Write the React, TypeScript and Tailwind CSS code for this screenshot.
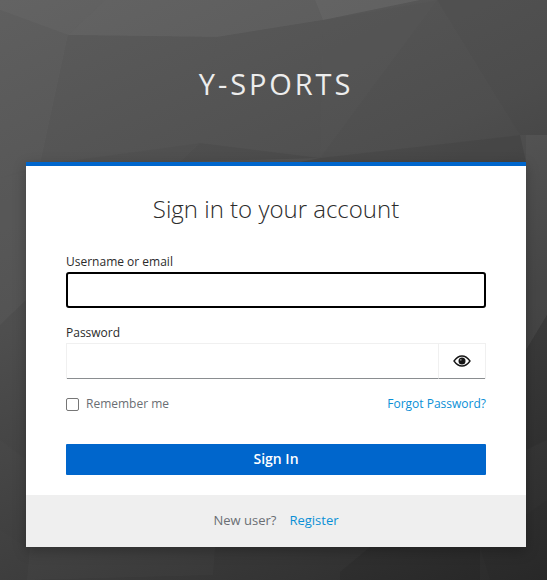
import React from "react";

const polys: [string, string, number][] = [
  ["0,0 105,0 68,35 0,10", "#fff", 0.03],
  ["105,0 315,0 323,20 217,37 68,35", "#fff", 0.04],
  ["315,0 420,0 323,20", "#fff", 0.07],
  ["0,10 68,35 40,165 0,178", "#fff", 0.01],
  ["68,35 217,37 200,143 40,165", "#000", 0.02],
  ["217,37 323,20 320,158 200,143", "#000", 0.02],
  ["323,20 437,0 320,158", "#000", 0.01],
  ["437,0 520,135 320,158", "#000", 0.03],
  ["437,0 547,0 547,135 520,135", "#000", 0.06],
  ["40,165 200,143 180,162 26,162", "#000", 0.05],
  ["200,143 320,158 180,162", "#000", 0.08],
  ["320,158 520,135 526,162 300,162", "#000", 0.09],
  ["0,178 26,172 26,300 0,325", "#fff", 0.01],
  ["0,325 26,300 26,460 0,440", "#000", 0.03],
  ["0,440 26,460 26,547 0,530", "#000", 0.01],
  ["30,547 215,547 213,575 27,580", "#fff", 0.02],
  ["370,547 480,547 480,580 340,580 340,572", "#000", 0.08],
  ["480,547 547,500 547,580 490,580", "#000", 0.03],
  ["526,135 547,135 547,315 526,350", "#fff", 0.03],
  ["526,350 547,315 547,440 526,450", "#000", 0.06],
];

export default function App() {
  return (
    <div
      className="relative h-[580px] w-[547px] overflow-hidden bg-[linear-gradient(155deg,#5e5e5e_0%,#515151_40%,#2a2a2a_100%)] text-[#151515]"
      style={{ fontFamily: '"Open Sans", sans-serif' }}
    >
      <svg className="absolute inset-0" width="547" height="580" viewBox="0 0 547 580">
        {polys.map(([p, c, o], i) => (
          <polygon key={i} points={p} fill={c} fillOpacity={o} />
        ))}
      </svg>

      <div className="relative flex flex-col pl-[26px]">
        <h1 className="mt-[66px] h-[96px] w-[500px] text-center text-[29px] leading-[35px] font-normal tracking-[2.9px] text-[#ededed]">
          Y-SPORTS
        </h1>

        <main className="w-[500px] border-t-4 border-[#0066cc] bg-white shadow-[0_4px_12px_rgba(3,3,3,0.25)]">
          <div className="px-10 pt-[26px] pb-5">
            <h2 className="text-center text-2xl leading-[33px] font-light text-[#2b2b2b]">Sign in to your account</h2>

            <form className="mt-[25px]">
              <label className="block h-[22px] text-xs leading-[24px] text-[#2b2b2b]">Username or email</label>
              <input
                type="text"
                aria-label="Username or email"
                className="block h-9 w-full rounded-[3px] border-2 border-black bg-white outline-none"
              />

              <label className="mt-[13px] block h-[22px] text-xs leading-[24px] text-[#2b2b2b]">Password</label>
              <div className="flex h-9 w-full border border-b-0 border-[#f0f0f0]">
                <input type="password" aria-label="Password" className="min-w-0 flex-1 border-b border-[#8a8d90] bg-white outline-none" />
                <button
                  type="button"
                  aria-label="Show password"
                  className="flex w-[47px] items-center justify-center border-b border-l border-[#8a8d90] border-l-[#f0f0f0]"
                >
                  <svg width="18" height="12" viewBox="0 0 18 12">
                    <path d="M1 6 C3.5 2.5 6 1 9 1 C12 1 14.5 2.5 17 6 C14.5 9.5 12 11 9 11 C6 11 3.5 9.5 1 6 Z" fill="#fff" stroke="#151515" strokeWidth="1.3" />
                    <circle cx="9" cy="6" r="3.5" fill="#151515" />
                    <circle cx="7.8" cy="4.8" r="0.9" fill="#fff" fillOpacity="0.5" />
                  </svg>
                </button>
              </div>

              <div className="mt-[15px] flex h-[20px] items-center justify-between text-xs">
                <label className="flex items-center text-[#6a6e73]">
                  <input type="checkbox" className="h-[13px] w-[13px] appearance-none rounded-[2px] border border-[#767676] bg-white" />
                  <span className="ml-[7px]">Remember me</span>
                </label>
                <a className="text-[#0a8fd6]" href="#">Forgot Password?</a>
              </div>

              <button
                type="button"
                className="mt-[30px] block h-[31px] w-full rounded-[1px] bg-[#0066cc] pb-[2px] text-sm font-semibold text-white"
              >
                Sign In
              </button>
            </form>
          </div>

          <div className="flex h-[52px] items-center justify-center bg-[#efefef] text-[13px]">
            <span className="text-[#6a6e73]">New user?</span>
            <a className="ml-[13px] text-[#0a8fd6]" href="#">Register</a>
          </div>
        </main>
      </div>
    </div>
  );
}
